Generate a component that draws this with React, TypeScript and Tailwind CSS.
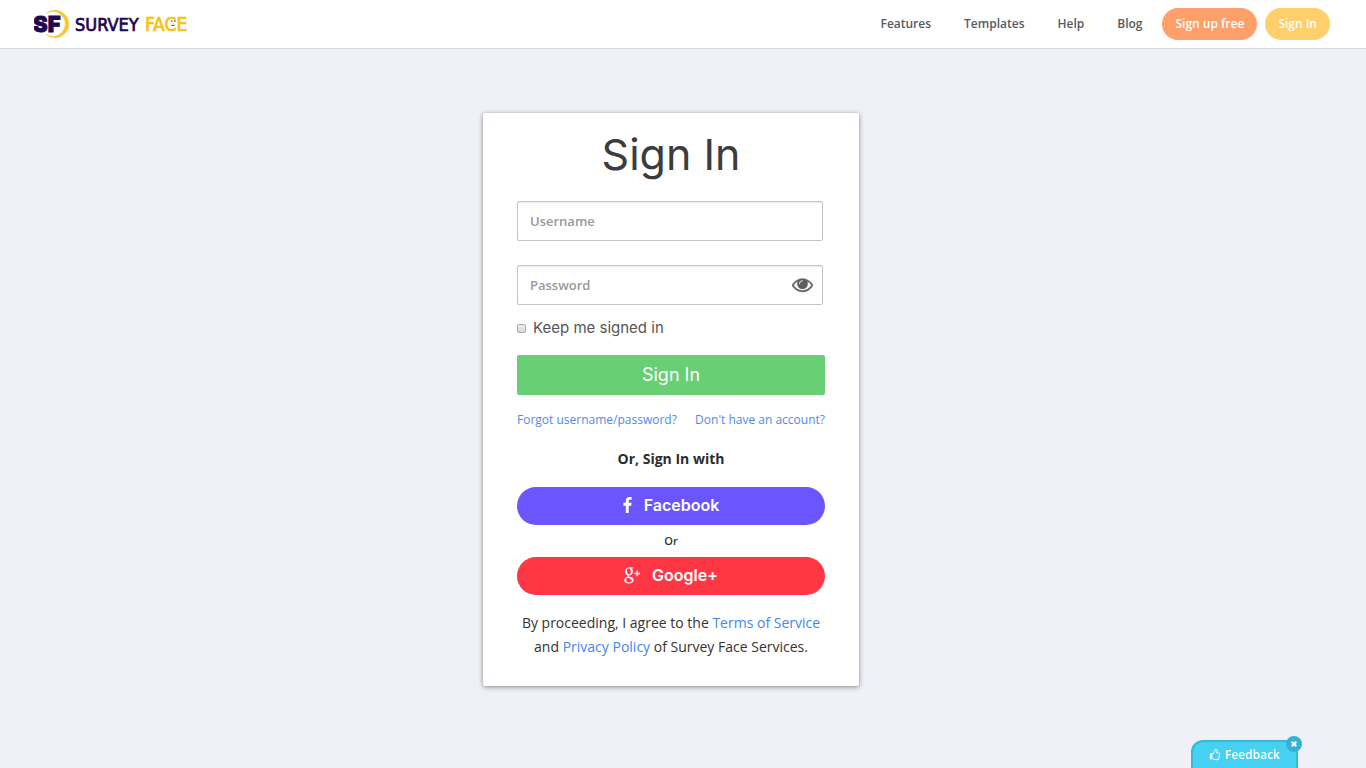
import { useState } from "react";

const navLinks = ["Features", "Templates", "Help", "Blog"];

export default function App() {
  return (
    <div className="min-h-screen flex flex-col bg-[#f0f1f7] font-['Open_Sans',sans-serif] text-[#333]">
      <header className="h-[49px] bg-white border-b border-[#d9d9dd] pl-[34px] pr-9 flex items-center justify-between">
        <Logo />
        <nav className="flex items-center text-xs font-semibold">
          <div className="flex gap-[33px] pr-5 text-[#555a5f]">
            {navLinks.map((label) => (
              <a key={label} href="#" className="hover:text-black">{label}</a>
            ))}
          </div>
          <div className="flex gap-2 text-white">
            <a href="#" className="h-8 px-[13px] rounded-full bg-[#ffa06b] flex items-center">Sign up free</a>
            <a href="#" className="h-8 px-[13px] rounded-full bg-[#ffcf6b] flex items-center">Sign In</a>
          </div>
        </nav>
      </header>

      <main className="flex-1 flex flex-col items-center pt-16 pb-20 pr-6">
        <SignInCard />
      </main>

      <Feedback />
    </div>
  );
}

function SignInCard() {
  const [showPassword, setShowPassword] = useState(false);

  return (
    <section className="w-full max-w-[376px] bg-white rounded-xs px-[34px] pt-[15px] pb-[27px] shadow-[0_1px_5px_rgba(0,0,0,0.45)]">
      <h1 className="font-[Inter,sans-serif] text-[43px] leading-[52px] text-center text-[#3c3c3e]">Sign In</h1>

      <form className="mt-[21px]" onSubmit={(e) => e.preventDefault()}>
        <div className="pr-0.5">
          <input
            type="text"
            aria-label="Username"
            placeholder="Username"
            className="w-full h-10 px-3 bg-white border border-[#c4c4c4] rounded-xs shadow-[inset_0_1px_1px_rgba(0,0,0,0.08)] text-[13px] font-semibold placeholder:text-[#999] outline-none"
          />
        </div>
        <div className="pr-0.5 mt-6 relative">
          <input
            type={showPassword ? "text" : "password"}
            aria-label="Password"
            placeholder="Password"
            className="w-full h-10 pl-3 pr-10 bg-white border border-[#c4c4c4] rounded-xs shadow-[inset_0_1px_1px_rgba(0,0,0,0.08)] text-[13px] font-semibold placeholder:text-[#999] outline-none"
          />
          <button
            type="button"
            aria-label="Show password"
            onClick={() => setShowPassword(!showPassword)}
            className="absolute right-3 top-[9px] text-[#5f5f5f]"
          >
            <EyeIcon />
          </button>
        </div>

        <label className="mt-[13px] flex items-center gap-[7px] font-[Inter,sans-serif] text-[15px] leading-5 text-[#555]">
          <input
            type="checkbox"
            className="appearance-none size-[9px] rounded-xs border border-[#a9a9a9] bg-linear-to-b from-[#eee] to-[#d8d8d8] checked:from-[#3b82f6] checked:to-[#3b82f6]"
          />
          Keep me signed in
        </label>

        <button type="submit" className="mt-[17px] w-full h-10 rounded-xs bg-[#68cf74] text-white font-[Inter,sans-serif] text-lg">
          Sign In
        </button>
      </form>

      <div className="mt-[17px] flex justify-between text-xs leading-4 text-[#5089f0]">
        <a href="#" className="hover:underline">Forgot username/password?</a>
        <a href="#" className="hover:underline">Don't have an account?</a>
      </div>

      <p className="mt-[21px] text-center text-sm leading-5 font-bold text-[#2c2c2c]">Or, Sign In with</p>

      <button className="mt-[18px] w-full h-[38px] pb-0.5 rounded-full bg-[#6a55ff] text-white font-[Inter,sans-serif] text-base font-semibold flex items-center justify-center gap-3">
        <FacebookIcon />
        Facebook
      </button>
      <p className="py-2 text-center text-[11px] leading-4 font-semibold">Or</p>
      <button className="w-full h-[38px] pb-0.5 rounded-full bg-[#ff3745] text-white font-[Inter,sans-serif] text-base font-semibold flex items-center justify-center gap-3">
        <GooglePlusIcon />
        Google+
      </button>

      <p className="mt-4 text-center text-sm leading-6">
        By proceeding, I agree to the <a href="#" className="text-[#4285f4]">Terms of Service</a>{" "}
        and <a href="#" className="text-[#4285f4]">Privacy Policy</a> of Survey Face Services.
      </p>
    </section>
  );
}

function Feedback() {
  const [open, setOpen] = useState(true);
  if (!open) return null;

  return (
    <div className="fixed bottom-0 right-[68px]">
      <button className="h-7 px-4 rounded-t-xl border-2 border-b-0 border-[#35b9d9] bg-[#44d1f2] text-white text-xs font-semibold flex items-center gap-1">
        <ThumbIcon />
        Feedback
      </button>
      <button
        aria-label="Close feedback"
        onClick={() => setOpen(false)}
        className="absolute -top-1 -right-1 size-4 rounded-full bg-[#35b1d3] text-white flex items-center justify-center"
      >
        <svg width="6" height="6" viewBox="0 0 6 6" stroke="currentColor" strokeWidth="2">
          <path d="M.7.7l4.600 4.600M5.300.7L.7 5.300" />
        </svg>
      </button>
    </div>
  );
}

function Logo() {
  return (
    <a href="#" aria-label="Survey Face">
      <svg width="160" height="32" viewBox="0 0 160 32">
        {/* crescent ring behind the initials, tapering to the left */}
        <path
          d="M12 5.500A13.800 13.800 0 1 1 12 26.500A12.500 12.500 0 1 0 12 5.500Z"
          fill="#fcc62d"
          stroke="#fcc62d"
          strokeWidth="0.5"
        />
        <text x="-1" y="24" fontFamily="Inter, sans-serif" fontSize="22" fontWeight="900" fill="#22044f" stroke="#22044f" strokeWidth="0.8">SF</text>
        <g fontFamily="'DejaVu Sans Condensed', 'DejaVu Sans', sans-serif" strokeWidth="0.7">
          <text x="41" y="23" fontSize="18" fill="#22044f" stroke="#22044f">SURVEY</text>
          <text x="111" y="23" fontSize="19" fill="#fcc010" stroke="#fcc010">FACE</text>
        </g>
        {/* little face in the C */}
        <circle cx="139" cy="15" r="3.500" fill="#fff" />
        <path d="M136.800 13h1.700M140 13h1.700M137.500 17q1.500 1.200 3 0" stroke="#333" strokeWidth="1" fill="none" />
      </svg>
    </a>
  );
}

function EyeIcon() {
  return (
    <svg width="21" height="21" viewBox="0 0 1792 1792" fill="currentColor" stroke="currentColor" strokeWidth="30">
      <path d="M1664 960q-152-236-381-353 61 104 61 225 0 185-131.500 316.500t-316.500 131.500-316.500-131.500-131.500-316.500q0-121 61-225-229 117-381 353 133 205 333.500 326.500t434.500 121.500 434.500-121.500 333.500-326.500zm-720-384q0-20-14-34t-34-14q-125 0-214.500 89.500t-89.500 214.500q0 20 14 34t34 14 34-14 14-34q0-86 61-147t147-61q20 0 34-14t14-34zm848 384q0 34-20 69-140 230-376.500 368.500t-499.500 138.500-499.500-139-376.500-368q-20-35-20-69t20-69q140-229 376.500-368t499.500-139 499.500 139 376.500 368q20 35 20 69z" />
    </svg>
  );
}

function FacebookIcon() {
  return (
    <svg width="9" height="16" viewBox="479 0 864 1664" fill="currentColor">
      <path d="M1343 12v264h-157q-86 0-116 36t-30 108v189h293l-39 296h-254v759h-306v-759h-255v-296h255v-218q0-186 104-288.500t277-102.500q147 0 228 12z" />
    </svg>
  );
}

function GooglePlusIcon() {
  return (
    <svg width="16" height="17" viewBox="0 0 16 17" fill="currentColor">
      {/* bowl and loop are filled rings, heavier at the sides */}
      <path
        fillRule="evenodd"
        d="M5 .5h5l-1.200 1h-1.200q1.300 1.100 1.300 3c0 2.400-1.800 3.900-4 3.900S1.100 7 1.100 4.500 2.800.5 5 .5ZM4.700 1.300C3.500 1.300 2.800 2.600 3 4.300s1.200 3.300 2.300 3.300S7.100 6.400 6.900 4.600 5.900 1.300 4.700 1.300Z"
      />
      <path
        fillRule="evenodd"
        d="M4.900 9.800C2.300 9.800.3 11 .3 13.200s2 3.300 4.600 3.300 4.800-1.200 4.800-3.400-2-3.300-4.800-3.300ZM5.100 10.800c1.700.2 2.700 1.200 2.700 2.600s-1.100 2.200-2.800 2.200-2.900-1-2.900-2.600 1.200-2.300 3-2.200Z"
      />
      <path d="M4.500 7.800q-1.500 1.200.3 2.200l2.800 2" fill="none" stroke="currentColor" strokeWidth="1.300" />
      <path d="M10.500 6.500h5.500M13.200 3.800v5.500" fill="none" stroke="currentColor" strokeWidth="1.300" />
    </svg>
  );
}

function ThumbIcon() {
  return (
    <svg width="12" height="12" viewBox="0 0 1792 1792" fill="currentColor">
      <path d="M384 1344q0-26-19-45t-45-19-45 19-19 45 19 45 45 19 45-19 19-45zm1152-576q0-51-39-89.500t-89-38.500h-352q0-58 48-159.500t48-160.500q0-98-32-145t-128-47q-26 26-38 85t-30.500 125.500-59.500 109.500q-22 23-77 91-4 5-23 30t-31.500 41-34.500 42.500-40 44-38.500 35.500-40 27-35.500 9h-32v640h32q13 0 31.500 3t33 6.500 38 11 35 11.500 35.500 12.500 29 10.500q211 73 342 73h121q192 0 192-167 0-26-5-56 30-16 47.500-52.500t17.500-73.500-18-69q53-50 53-119 0-25-10-55.500t-25-47.500q32-1 53.500-47t21.500-81zm128-1q0 89-49 163 9 33 9 69 0 77-38 144 3 21 3 43 0 101-60 178 1 139-85 219.500t-227 80.500h-129q-96 0-189.500-22.500t-216.500-65.500q-116-40-138-40h-288q-53 0-90.500-37.500t-37.500-90.500v-640q0-53 37.500-90.500t90.500-37.500h274q36-24 137-155 58-75 107-128 24-25 35.500-85.500t30.500-126.500 62-108q39-37 90-37 84 0 151 32.500t102 101.500 35 186q0 93-48 192h176q104 0 180 76t76 179z" />
    </svg>
  );
}
